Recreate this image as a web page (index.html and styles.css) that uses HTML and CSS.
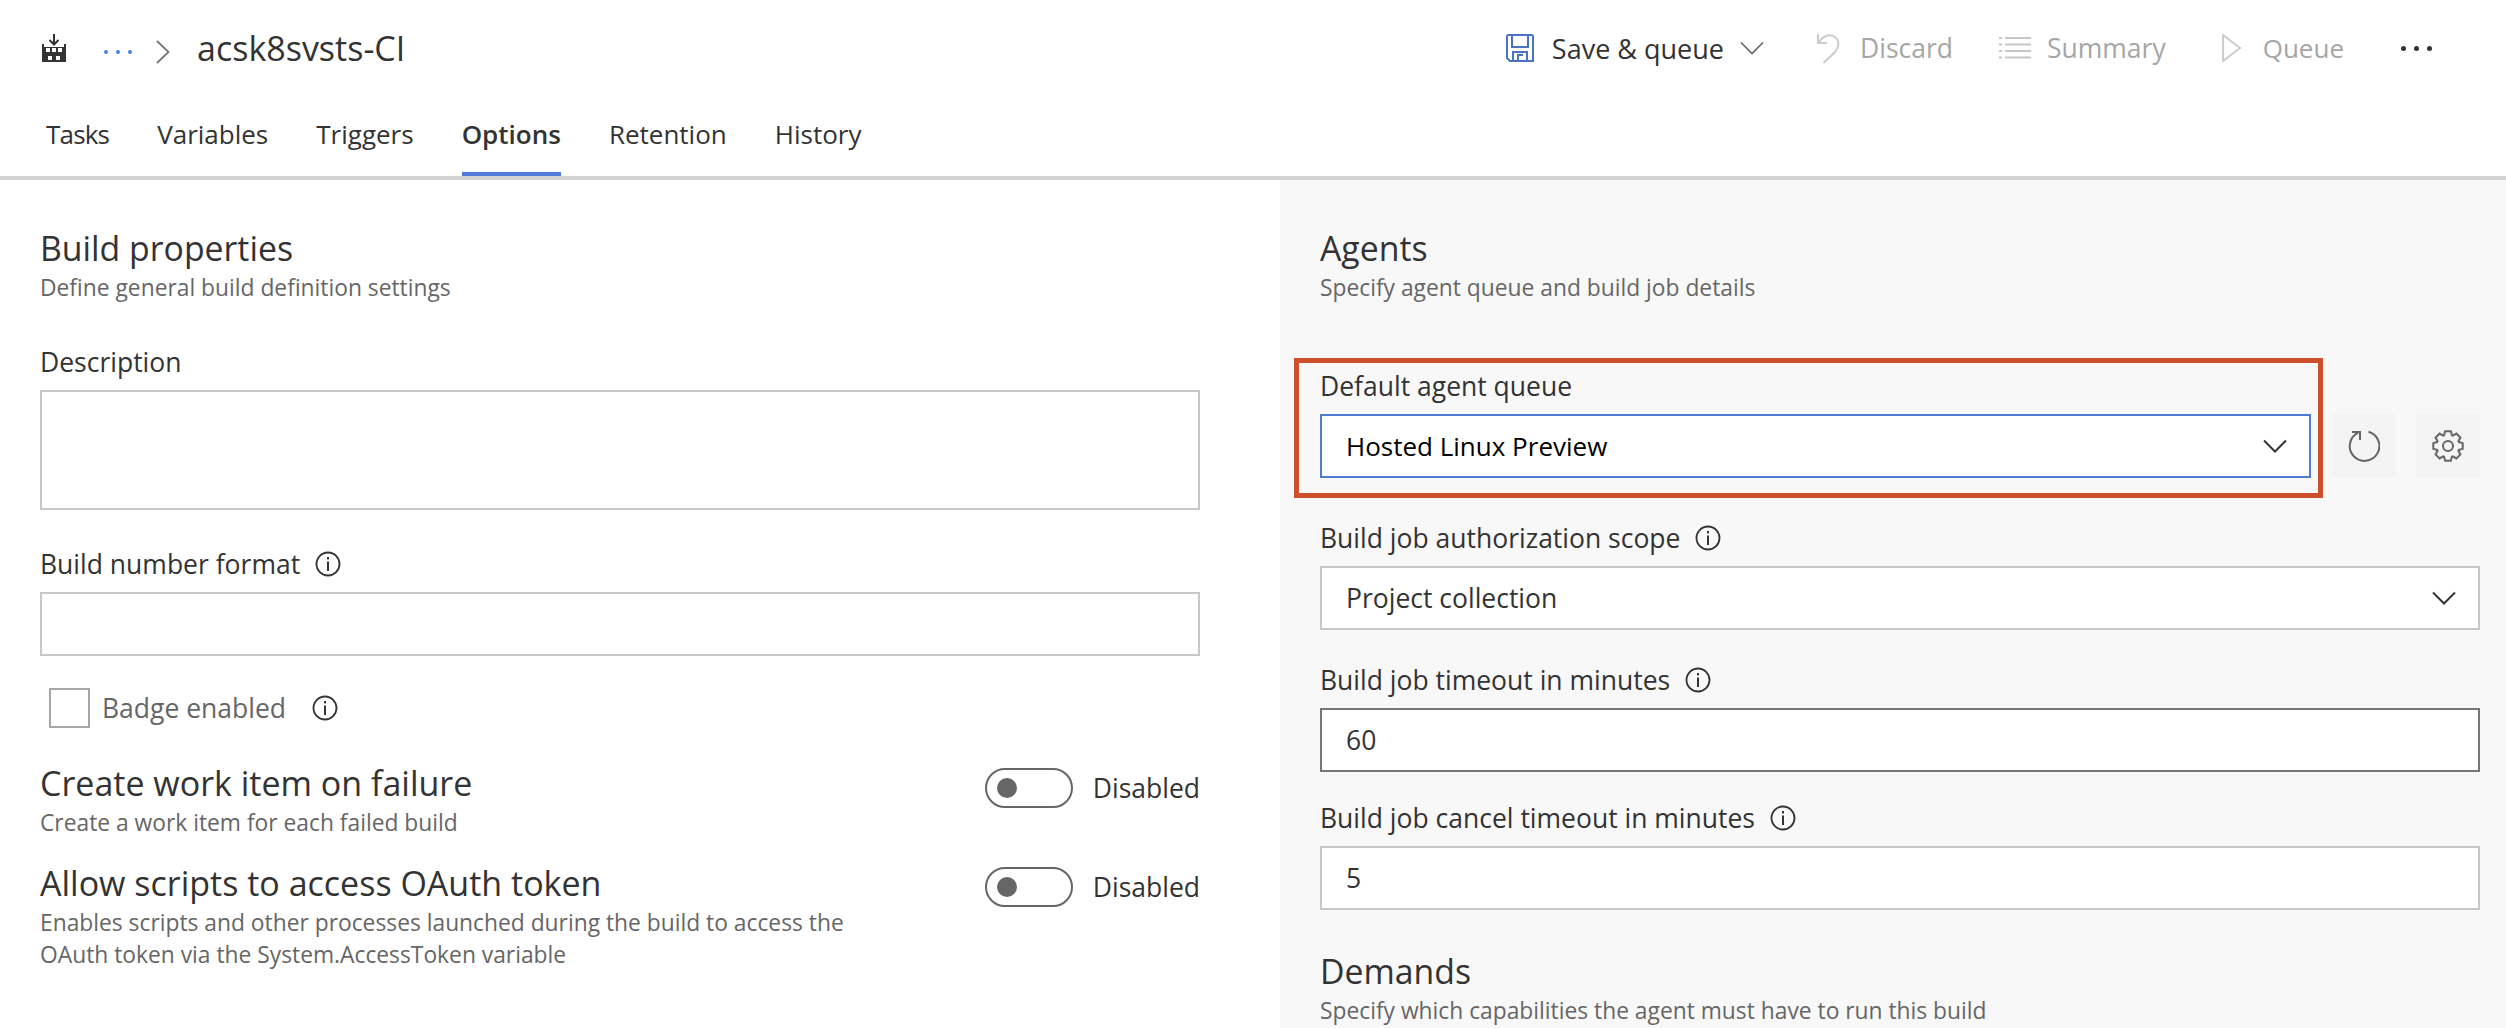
FILE: index.html
```html
<!DOCTYPE html>
<html lang="en">
<head>
    <meta charset="UTF-8">
    <title>acsk8svsts-CI - Options</title>
    <link rel="stylesheet" href="styles.css">
</head>
<body>

    <svg class="sprites" width="0" height="0">
        <symbol id="icon-info" viewBox="0 0 26 26">
            <circle cx="13" cy="13" r="11.5" fill="none" stroke="currentColor" stroke-width="1.8"/>
            <rect x="12" y="6" width="2" height="2.4" fill="currentColor"/>
            <rect x="12" y="10.5" width="2" height="9.5" fill="currentColor"/>
        </symbol>
        <symbol id="icon-chevron" viewBox="0 0 24 14">
            <path d="M1 1.5 L12 12.5 L23 1.5" fill="none" stroke="currentColor"/>
        </symbol>
    </svg>

    <header class="topbar">
        <div class="crumbs">
            <svg class="build-icon" width="24" height="28" viewBox="0 0 24 28">
                <path d="M0 10 h2 v3 h20 v-3 h2 v18 h-24 z M4 14 v4 h4 v-4 z M10 14 v4 h4 v-4 z M16 14 v4 h4 v-4 z M6 22 v4 h4 v-4 z M14 22 v4 h4 v-4 z" fill="#333" fill-rule="evenodd"/>
                <path d="M12 0 v10 M7.5 6 L12 10.500 L16.500 6" fill="none" stroke="#333" stroke-width="2"/>
            </svg>
            <span class="crumb-dots"><i></i><i></i><i></i></span>
            <svg class="crumb-sep" width="14" height="24" viewBox="0 0 14 24">
                <path d="M1 1 L12.500 12 L1 23" fill="none" stroke="#777" stroke-width="1.800"/>
            </svg>
            <span class="crumb-title">acsk8svsts-CI</span>
        </div>
        <div class="actions">
            <span class="action save">
                <svg width="28" height="28" viewBox="0 0 28 28">
                    <path d="M2.500 1 H25.500 A1.500 1.500 0 0 1 27 2.500 V27 H4 L1 24 V2.500 A1.500 1.500 0 0 1 2.500 1 Z M6 1 V13 H22 V1 M7 27 V18 H21 V27 M12 27 V21 H17" fill="none" stroke="#4a72c4" stroke-width="2"/>
                </svg>
                Save &amp; queue
                <svg class="save-chevron" width="24" height="14"><use href="#icon-chevron"/></svg>
            </span>
            <span class="action off discard">
                <svg width="24" height="32" viewBox="0 0 24 32">
                    <path d="M2 2 V11 H11 M2.500 10.500 C7 4 14 1 19 5 C24 9 23 15 19 20 L7.500 31" fill="none" stroke="#ccc" stroke-width="2"/>
                </svg>
                Discard
            </span>
            <span class="action off summary">
                <svg width="32" height="24" viewBox="0 0 32 24">
                    <path d="M0 2 h3 M6 2 h26 M0 8.500 h3 M6 8.500 h26 M0 15 h3 M6 15 h26 M0 21.500 h3 M6 21.500 h26" fill="none" stroke="#c6c6c6" stroke-width="2"/>
                </svg>
                Summary
            </span>
            <span class="action off queue">
                <svg width="20" height="28" viewBox="0 0 20 28">
                    <path d="M1 1 L18 14 L1 27 Z" fill="none" stroke="#ccc" stroke-width="2"/>
                </svg>
                Queue
            </span>
            <span class="more-dots"><i></i><i></i><i></i></span>
        </div>
    </header>

    <nav class="tabs">
        <a class="tab">Tasks</a>
        <a class="tab">Variables</a>
        <a class="tab">Triggers</a>
        <a class="tab active">Options</a>
        <a class="tab">Retention</a>
        <a class="tab">History</a>
    </nav>

    <main class="content">
        <section class="column left">
            <h2 class="section-title">Build properties</h2>
            <p class="section-sub">Define general build definition settings</p>

            <div class="field description">
                <label class="field-label">Description</label>
                <div class="box area"></div>
            </div>

            <div class="field number-format">
                <label class="field-label">Build number format
                    <svg class="info" width="26" height="26"><use href="#icon-info"/></svg>
                </label>
                <div class="box"></div>
            </div>

            <div class="badge-row">
                <span class="checkbox"></span>
                <span class="badge-label">Badge enabled</span>
                <svg class="info" width="26" height="26"><use href="#icon-info"/></svg>
            </div>

            <div class="setting first">
                <div class="setting-text">
                    <h3 class="setting-title">Create work item on failure</h3>
                    <p class="section-sub">Create a work item for each failed build</p>
                </div>
                <div class="switch-wrap">
                    <span class="switch"></span>
                    <span class="switch-label">Disabled</span>
                </div>
            </div>

            <div class="setting">
                <div class="setting-text">
                    <h3 class="setting-title">Allow scripts to access OAuth token</h3>
                    <p class="section-sub">Enables scripts and other processes launched during the build to access the OAuth token via the System.AccessToken variable</p>
                </div>
                <div class="switch-wrap">
                    <span class="switch"></span>
                    <span class="switch-label">Disabled</span>
                </div>
            </div>
        </section>

        <section class="column right">
            <h2 class="section-title">Agents</h2>
            <p class="section-sub">Specify agent queue and build job details</p>

            <div class="queue-row">
                <div class="highlight">
                    <label class="field-label">Default agent queue</label>
                    <div class="box select focused">
                        <span class="value strong">Hosted Linux Preview</span>
                        <svg class="select-chevron" width="24" height="14"><use href="#icon-chevron"/></svg>
                    </div>
                </div>
                <button class="icon-btn">
                    <svg width="32" height="32" viewBox="0 0 32 32">
                        <path d="M20.500 1.800 A14.800 14.800 0 1 1 10 2.800 M4 2 H12 V10" fill="none" stroke="#666" stroke-width="2"/>
                    </svg>
                </button>
                <button class="icon-btn">
                    <svg width="32" height="32" viewBox="0 0 32 32">
                        <path d="M13.140 1.280 H18.860 L19.930 5.190 L20.860 5.580 L24.390 3.560 L28.440 7.610 L26.420 11.140 L26.810 12.070 L30.720 13.140 V18.860 L26.810 19.930 L26.420 20.860 L28.440 24.390 L24.390 28.440 L20.860 26.420 L19.930 26.810 L18.860 30.720 H13.140 L12.070 26.810 L11.140 26.420 L7.610 28.440 L3.560 24.390 L5.580 20.860 L5.190 19.930 L1.280 18.860 V13.140 L5.190 12.070 L5.580 11.140 L3.560 7.610 L7.610 3.560 L11.140 5.580 L12.070 5.190 Z" fill="none" stroke="#666" stroke-width="2"/>
                        <circle cx="16" cy="16" r="5" fill="none" stroke="#666" stroke-width="2"/>
                    </svg>
                </button>
            </div>

            <div class="field scope">
                <label class="field-label">Build job authorization scope
                    <svg class="info" width="26" height="26"><use href="#icon-info"/></svg>
                </label>
                <div class="box select">
                    <span class="value">Project collection</span>
                    <svg class="select-chevron" width="24" height="14"><use href="#icon-chevron"/></svg>
                </div>
            </div>

            <div class="field timeout">
                <label class="field-label">Build job timeout in minutes
                    <svg class="info" width="26" height="26"><use href="#icon-info"/></svg>
                </label>
                <div class="box select hover"><span class="value">60</span></div>
            </div>

            <div class="field cancel">
                <label class="field-label">Build job cancel timeout in minutes
                    <svg class="info" width="26" height="26"><use href="#icon-info"/></svg>
                </label>
                <div class="box select"><span class="value">5</span></div>
            </div>

            <h2 class="section-title demands">Demands</h2>
            <p class="section-sub">Specify which capabilities the agent must have to run this build</p>
        </section>
    </main>

</body>
</html>
```

FILE: styles.css
```css
* {
    box-sizing: border-box;
}

html, body {
    height: 1028px;
    overflow: hidden;
}

body {
    margin: 0;
    font-family: "Open Sans", "Noto Sans", sans-serif;
    font-size: 26.500px;
    color: #333;
    background-color: #fff;
}

.sprites {
    position: absolute;
}

/* top bar */
.topbar {
    height: 100px;
    display: flex;
    justify-content: space-between;
    align-items: center;
    padding: 0 74px 4px 42px;
}

.crumbs, .actions, .action {
    display: flex;
    align-items: center;
}

.crumb-dots, .more-dots {
    display: flex;
}

.crumb-dots {
    gap: 8px;
    margin-left: 38px;
    margin-top: 8px;
}

.crumb-dots i, .more-dots i {
    width: 4px;
    height: 4px;
    border-radius: 50%;
    background-color: #333;
}

.crumb-dots i {
    background-color: #4a80e0;
}

.crumb-sep {
    margin-left: 24px;
    margin-top: 8px;
}

.crumb-title {
    margin-left: 27px;
    font-size: 34px;
}

.action {
    font-size: 26.500px;
    gap: 18px;
}

.save {
    font-size: 27px;
}

.off {
    color: #a6a6a6;
}

.discard {
    margin-left: 52px;
    gap: 20px;
}

.summary {
    margin-left: 46px;
    gap: 16px;
}

.queue {
    margin-left: 56px;
    gap: 21px;
    font-size: 26px;
}

.save-chevron {
    color: #666;
    margin-left: -2px;
    stroke-width: 1.6;
}

.more-dots {
    gap: 8px;
    margin-left: 57px;
}

.more-dots i {
    width: 5px;
    height: 5px;
}

/* tabs */
.tabs {
    height: 80px;
    display: flex;
    gap: 48px;
    padding-left: 46px;
    border-bottom: 4px solid #d2d2d2;
}

.tab {
    height: 76px;
    padding-top: 16px;
    font-size: 26px;
    line-height: 36px;
}

.tab:first-child {
    letter-spacing: -0.800px;
}

.tab.active {
    font-weight: 600;
    border-bottom: 4px solid #4f7bd6;
}

/* panels */
.content {
    display: flex;
    height: 848px;
}

.column {
    padding-top: 46px;
}

.left {
    width: 1280px;
    padding-left: 40px;
    padding-right: 80px;
}

.right {
    width: 1226px;
    padding-left: 40px;
    padding-right: 26px;
    background-color: #f8f8f8;
}

.section-title {
    margin: 0 0 2px;
    font-size: 33.800px;
    font-weight: 400;
    line-height: 44px;
}

.section-sub {
    margin: 0;
    font-size: 22.800px;
    line-height: 32px;
    color: #666;
}

.field-label {
    display: flex;
    align-items: center;
    gap: 15px;
    height: 32px;
    margin-bottom: 12px;
}

.info {
    color: #333;
}

.box {
    height: 64px;
    background-color: #fff;
    border: 2px solid #c8c8c8;
}

.box.area {
    height: 120px;
}

.description {
    margin-top: 42px;
}

.number-format {
    margin-top: 38px;
}

/* badge checkbox */
.badge-row {
    display: flex;
    align-items: center;
    height: 40px;
    margin-top: 32px;
    padding-left: 9px;
}

.checkbox {
    width: 41px;
    height: 40px;
    border: 2px solid #a6a6a6;
    background-color: #fff;
}

.badge-label {
    margin-left: 12px;
    margin-right: 26px;
    color: #666;
}

/* settings with a switch */
.setting {
    display: flex;
    justify-content: space-between;
    align-items: flex-start;
    margin-top: 22px;
}

.setting.first {
    margin-top: 33px;
}

.setting.first .section-sub {
    margin-top: 1px;
}

.setting.first .switch-wrap {
    margin-top: 7px;
}

.setting-text {
    width: 840px;
}

.setting-title {
    margin: 0 0 2px;
    font-size: 34px;
    font-weight: 400;
    line-height: 44px;
}

.switch-wrap {
    display: flex;
    align-items: center;
    gap: 20px;
    margin-top: 6px;
}

.switch {
    display: flex;
    align-items: center;
    width: 88px;
    height: 40px;
    padding-left: 10px;
    border: 2px solid #666;
    border-radius: 20px;
    background-color: #fff;
}

.switch::before {
    content: "";
    width: 20px;
    height: 20px;
    border-radius: 50%;
    background-color: #666;
}

/* right column */
.queue-row {
    display: flex;
    align-items: flex-end;
    margin-top: 54px;
    margin-left: -26px;
}

.highlight {
    width: 1029px;
    height: 140px;
    padding: 7px 7px 15px 21px;
    border: 5px solid #cf4f2c;
}

.icon-btn {
    display: flex;
    align-items: center;
    justify-content: center;
    width: 64px;
    height: 64px;
    margin-bottom: 20px;
    margin-left: 20px;
    padding: 0;
    border: none;
    background-color: #f4f4f4;
}

.highlight + .icon-btn {
    margin-left: 9px;
}

.select {
    display: flex;
    align-items: center;
    justify-content: space-between;
    padding: 0 22px 0 24px;
}

.focused {
    border-color: #4f7bd6;
}

.hover {
    border-color: #767676;
}

.value {
    font-size: 26.500px;
}

.strong {
    font-size: 26px;
    color: #000;
}

.select-chevron {
    color: #333;
    stroke-width: 2;
}

.scope {
    margin-top: 24px;
}

.timeout {
    margin-top: 34px;
}

.cancel {
    margin-top: 30px;
}

.demands {
    margin-top: 39px;
}
```
